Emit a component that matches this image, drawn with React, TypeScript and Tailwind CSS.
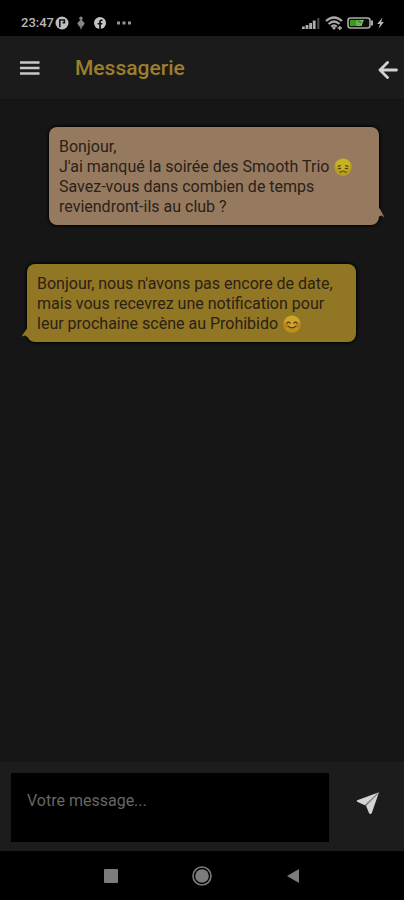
import type { ReactNode } from "react";

type IconProps = {
  className?: string;
};

type MessageBubbleProps = {
  side: "sent" | "received";
  children: ReactNode;
};

function SadFace() {
  return (
    <svg viewBox="0 0 18 18" role="img" aria-label="déçu" className="ml-px inline-block size-[18px] align-[-4px]">
      <circle cx="9" cy="9" r="8.7" fill="#b9a01c" />
      <ellipse cx="9" cy="6.8" rx="7.4" ry="6" fill="#c8b324" />
      <g fill="none" stroke="#4c3f14" strokeWidth="1.1" strokeLinecap="round">
        <path d="M3.8 8.3 6.4 7.6M14.2 8.3 11.6 7.6" />
        <path d="M4.4 10.2Q5.6 11 6.8 10.2M11.2 10.2Q12.4 11 13.6 10.2" />
        <path d="M6 14.4Q9 11.6 12 14.4" />
      </g>
    </svg>
  );
}

function HappyFace() {
  return (
    <svg viewBox="0 0 18 18" role="img" aria-label="sourire" className="ml-px inline-block size-[18px] align-[-4px]">
      <circle cx="9" cy="9" r="8.7" fill="#bf901c" />
      <ellipse cx="9" cy="6.5" rx="7.2" ry="5.8" fill="#cba82a" />
      <circle cx="3.6" cy="10.6" r="2.2" fill="#c2761f" />
      <circle cx="14.4" cy="10.6" r="2.2" fill="#c2761f" />
      <g fill="none" stroke="#4c3212" strokeWidth="1.2" strokeLinecap="round">
        <path d="M3.8 8.1Q5.5 6 7.2 8.1M10.8 8.1Q12.5 6 14.2 8.1" />
        <path d="M5.4 11.4Q9 14.2 12.6 11.4" />
      </g>
    </svg>
  );
}

function SendIcon({ className }: IconProps) {
  return (
    <svg viewBox="0 0 24 24" aria-hidden="true" className={className}>
      <path d="M23 1.2 1.2 9.2Q.2 10 1.2 10.8L8.8 14.2Z" fill="#d4d4d4" />
      <path d="M23 1.2 10 14.8 13 22Q14.2 24 15.8 22Z" fill="#d4d4d4" />
      <path d="M22 2.2 9.4 14.5" stroke="#8a8a8a" strokeWidth="1.2" />
    </svg>
  );
}

function StatusBar() {
  return (
    <div className="flex h-9 items-center justify-between bg-black pt-[10px] pr-5 pl-[21px] text-[#b8b8b8]">
      <div className="flex items-center">
        <span className="w-[34px] text-[13px] leading-4 font-medium">23:47</span>
        <svg viewBox="0 0 14 14" aria-hidden="true" className="size-[14px]">
          <circle cx="7" cy="7" r="6.5" fill="#bdbdbd" />
          <path d="M4.8 11.2V4H9.4V6.8H7.6" fill="none" stroke="#111" strokeWidth="1.6" />
        </svg>
        <svg viewBox="0 0 10 14" aria-hidden="true" className="ml-[7px] h-[14px] w-[10px]">
          <g fill="#858585">
            <circle cx="5" cy="2.2" r="1.7" />
            <path d="M5 3.2 8.8 7.2 6.8 10.4H3.2L1.2 7.2Z" />
            <path d="M3.6 10.2H6.4L5 13.8Z" />
          </g>
        </svg>
        <svg viewBox="0 0 12 12" aria-hidden="true" className="ml-2 size-3">
          <circle cx="6" cy="6" r="6" fill="#c4c4c4" />
          <path d="M5.2 12V7.6H3.6V5.9H5.2V4.6Q5.2 2.4 7.3 2.4H8.5V4H7.6Q6.9 4 6.9 4.8V5.9H8.5L8.2 7.6H6.9V12Z" fill="#0c0c0c" />
        </svg>
        <svg viewBox="0 0 14 4" aria-hidden="true" className="ml-[11px] h-1 w-[14px]">
          <path d="M0 .5H3V3.5H0ZM5.5.5H8.5V3.5H5.5ZM11 .5H14V3.5H11Z" fill="#969696" />
        </svg>
      </div>

      <div className="flex items-center">
        <svg viewBox="0 0 18 12" aria-hidden="true" className="h-3 w-[18px]">
          <path d="M0 9.5H2.8V12H0ZM3.6 8H6.4V12H3.6ZM7.2 6H10V12H7.2ZM10.8 3.5H13.6V12H10.8Z" fill="#adadad" />
          <path d="M15.2 1H17.4V12H15.2Z" fill="#4a4a4a" />
        </svg>
        <svg viewBox="0 0 18 14" aria-hidden="true" className="ml-[5px] h-[14px] w-[18px]">
          <g fill="none" stroke="#a8a8a8" strokeWidth="2.3">
            <path d="M1 5Q9-2 17 5" />
            <path d="M3.6 8Q9 3 14.4 8" />
            <path d="M6.2 10.8Q9 8 11.8 10.8" />
          </g>
          <circle cx="9" cy="12" r="1.6" fill="#a8a8a8" />
          <path d="M12.5 12H17M14.8 10V14" stroke="#a8a8a8" strokeWidth="1.5" />
        </svg>
        <svg viewBox="0 0 26 12" aria-hidden="true" className="ml-1 h-3 w-[26px]">
          <rect x="1" y="1" width="22" height="10" rx="2.5" fill="#0b0f08" stroke="#aaa" strokeWidth="1.6" />
          <path d="M24 3.5H26V8.5H24Z" fill="#aaa" />
          <rect x="3" y="3" width="12" height="6" fill="#3b9a1c" />
          <path d="M10.8 3.5Q9 6 10.6 8.5H12.6Q14.4 6.4 11 6M12.8 3.5H16L14 8.5" fill="none" stroke="#8fbf7c" strokeWidth="1.1" />
        </svg>
        <svg viewBox="0 0 7 12" aria-hidden="true" className="ml-1 h-3 w-[7px]">
          <path d="M5.4.5.2 7H3L1.6 11.8 6.9 5H4.2Z" fill="#b5b5b5" />
        </svg>
      </div>
    </div>
  );
}

function Header() {
  return (
    <header className="flex h-16 items-center border-b border-[#141414] bg-[#1b1b1b] pr-[6px] pl-5">
      <button type="button" aria-label="Menu" className="flex size-5 items-center justify-center">
        <svg viewBox="0 0 20 14" aria-hidden="true" className="h-[14px] w-5">
          <path d="M0 1.5H19.5M0 7H19.5M0 12.5H19.5" stroke="#c8c8c8" strokeWidth="2.4" />
        </svg>
      </button>
      <h1 className="ml-[35px] flex-1 text-[21px] leading-7 font-medium text-[#9c7f2b]">Messagerie</h1>
      <button type="button" aria-label="Retour" className="flex size-5 items-center justify-center">
        <svg viewBox="0 0 20 18" aria-hidden="true" className="mt-1 h-[18px] w-5">
          <path d="M9.5 1.5 2 9 9.5 16.5M2 9H18.5" fill="none" stroke="#d2d2d2" strokeWidth="2.8" strokeLinecap="round" strokeLinejoin="round" />
        </svg>
      </button>
    </header>
  );
}

function MessageBubble({ side, children }: MessageBubbleProps) {
  const sent = side === "sent";

  return (
    <li
      className={
        sent
          ? "relative mr-[25px] ml-[49px] rounded-lg bg-[#967a60] px-[10px] pt-[10px] pb-2 shadow-[0_0_3px_1px_#000000]"
          : "relative mr-12 ml-[27px] rounded-lg bg-[#917723] px-[10px] pt-[10px] pb-2 shadow-[0_0_3px_1px_#000000]"
      }
    >
      <p className="text-base leading-5 text-[#2b2117]">{children}</p>
      {sent ? (
        <svg viewBox="0 0 7 12" aria-hidden="true" className="absolute -right-[6px] bottom-[7px] h-3 w-[7px]">
          <path d="M0 1 2 3 6.5 11.5 3.5 9.5 0 11Z" fill="#967a60" />
        </svg>
      ) : (
        <svg viewBox="0 0 7 12" aria-hidden="true" className="absolute bottom-1 -left-[6px] h-3 w-[7px]">
          <path d="M7 1 .5 10.5 4 9.5 7 11.5Z" fill="#917723" />
        </svg>
      )}
    </li>
  );
}

function Composer() {
  return (
    <form className="flex items-start border-t border-[#202020] bg-[#1c1c1c] pt-[10px] pr-6 pb-[9px] pl-[11px]">
      <textarea
        aria-label="Votre message"
        placeholder="Votre message..."
        className="block h-[69px] min-w-0 flex-1 resize-none bg-black px-4 py-[18px] text-base leading-5 text-[#b0b0b0] outline-none placeholder:text-[#666666]"
      />
      <button type="button" aria-label="Envoyer" className="mt-[18px] ml-[27px] flex size-6 items-center justify-center">
        <SendIcon className="size-6" />
      </button>
    </form>
  );
}

function NavigationBar() {
  return (
    <nav className="flex h-[49px] items-center justify-center gap-[71px] bg-black">
      <button type="button" aria-label="Applications récentes" className="flex size-5 items-center justify-center">
        <span className="size-[14px] rounded-[1px] bg-[#7c7c7c]" />
      </button>
      <button type="button" aria-label="Accueil" className="flex size-5 items-center justify-center">
        <svg viewBox="0 0 20 20" aria-hidden="true" className="size-5">
          <circle cx="10" cy="10" r="9" fill="none" stroke="#7c7c7c" strokeWidth="1.6" />
          <circle cx="10" cy="10" r="6.8" fill="#7c7c7c" />
        </svg>
      </button>
      <button type="button" aria-label="Précédent" className="flex size-5 items-center justify-center">
        <svg viewBox="0 0 12 14" aria-hidden="true" className="h-[14px] w-3">
          <path d="M12 0V14L0 7Z" fill="#7c7c7c" />
        </svg>
      </button>
    </nav>
  );
}

export default function App() {
  return (
    <div className="flex min-h-screen flex-col bg-[#161616] font-['Roboto','Liberation_Sans',sans-serif]">
      <StatusBar />
      <Header />
      <main className="flex-1 pt-[27px]">
        <ul className="space-y-[39px]">
          <MessageBubble side="sent">
            Bonjour,
            <br />
            J'ai manqué la soirée des Smooth Trio <SadFace />
            <br />
            Savez-vous dans combien de temps
            <br />
            reviendront-ils au club ?
          </MessageBubble>
          <MessageBubble side="received">
            Bonjour, nous n'avons pas encore de date, mais vous recevrez une notification pour leur prochaine scène au
            Prohibido <HappyFace />
          </MessageBubble>
        </ul>
      </main>
      <Composer />
      <NavigationBar />
    </div>
  );
}
